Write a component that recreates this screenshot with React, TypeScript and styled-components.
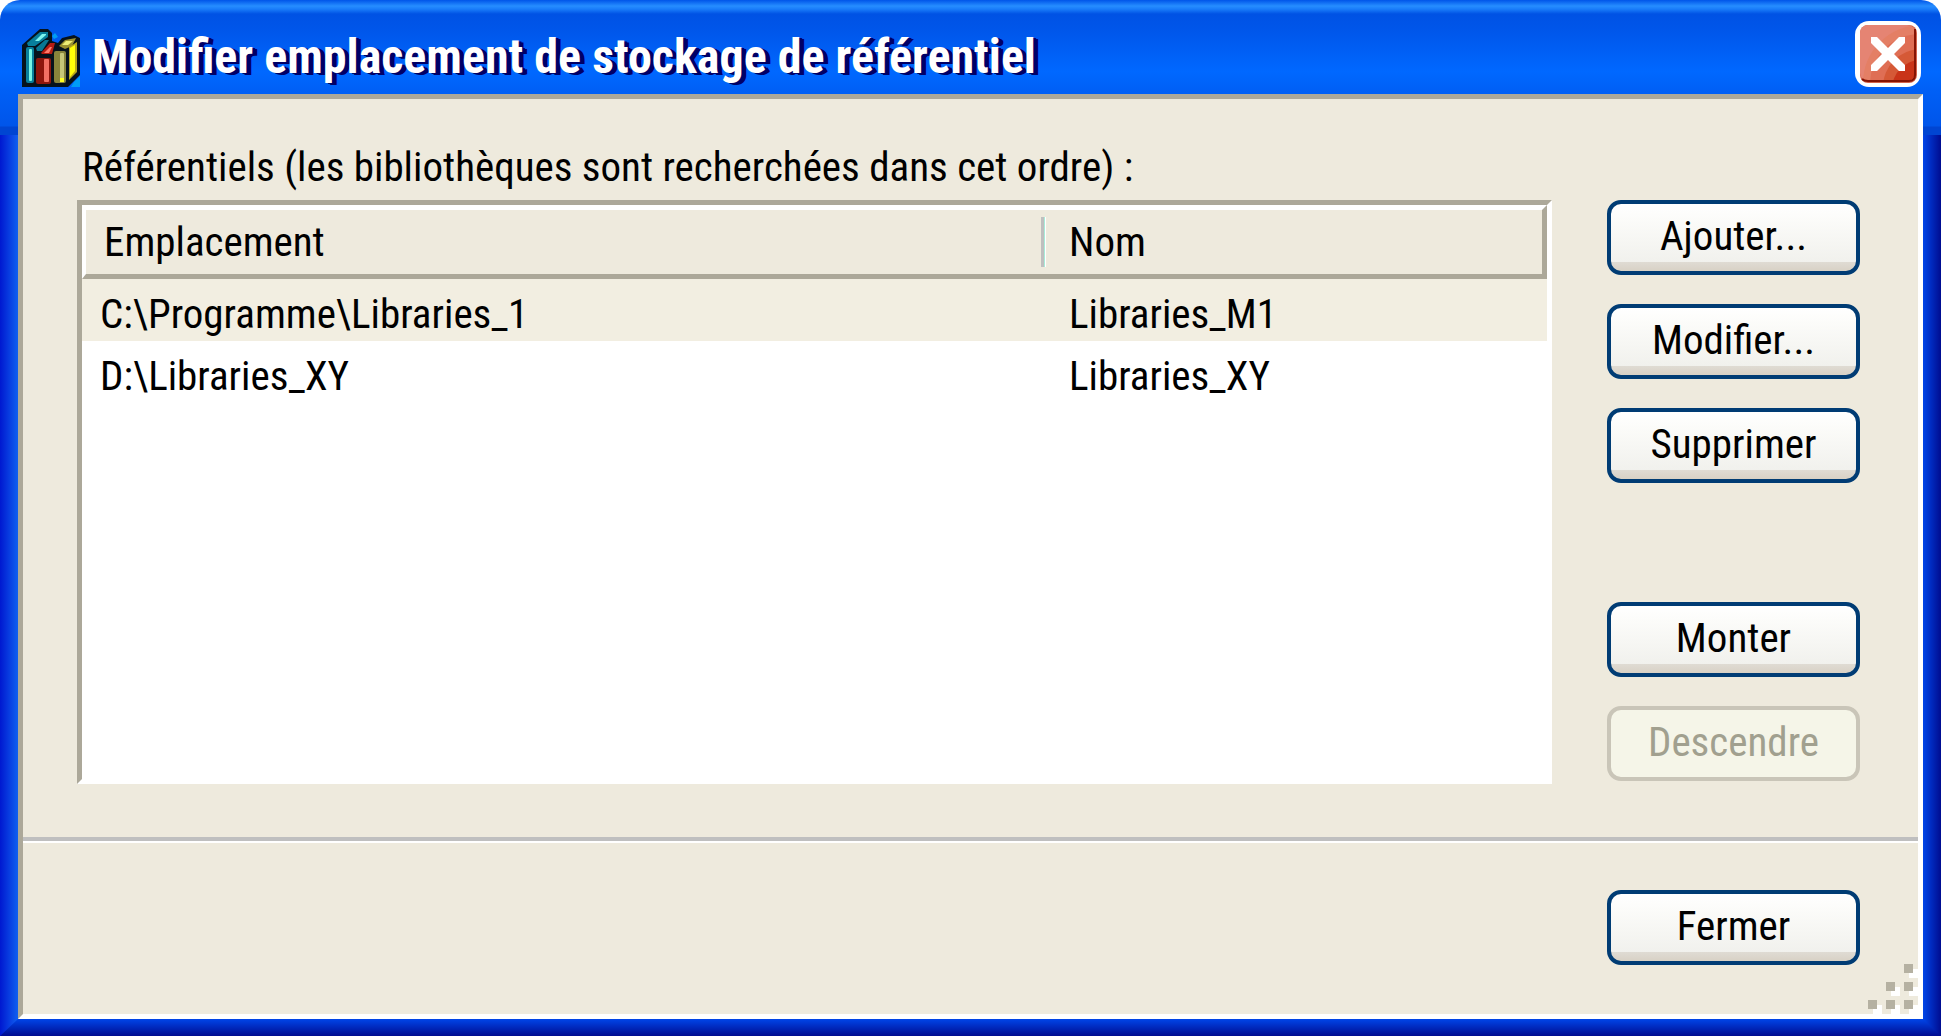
import React from "react";
import styled, { createGlobalStyle, css } from "styled-components";

const FACE = "#eeeadd";
const SHADE = "#aca899";

const GlobalStyle = createGlobalStyle`
  *, *::before, *::after { box-sizing: border-box; }
  body {
    margin: 0;
    background: #fff;
    color: #000;
    font-family: "Liberation Sans Narrow", "Arial Narrow", "Roboto Condensed", "Liberation Sans", sans-serif;
    font-size: 41px;
    line-height: 50px;
  }
`;

const Window = styled.main`
  position: relative;
  min-height: 100vh;
  display: flex;
  flex-direction: column;
  padding: 0 18px 17px;
  border-radius: 20px 20px 0 0;
  background:
    linear-gradient(#0055e9 0, #268dff 6px, #1a7dfa 9px, #0052e4 14px, #0056ea 30px, #0068ff 72px, #0060f6 90px, #0055ea 126px, #0045d2 127px, #0045d2 135px) top / 100% 135px no-repeat,
    linear-gradient(to right, #0018d0, #1060f0) left / 18px 100% no-repeat,
    linear-gradient(to right, #0045e8, #000c90) right / 18px 100% no-repeat;

  &::after {
    content: "";
    position: absolute;
    inset: auto 0 0;
    height: 17px;
    background: linear-gradient(#0045e8, #000c90);
    clip-path: polygon(0 100%, 18px 0, calc(100% - 18px) 0, 100% 100%);
  }
`;

const TitleBar = styled.header`
  display: flex;
  align-items: flex-end;
  height: 94px;
  padding: 0 2px 7px 4px;
  gap: 12px;
`;

const Title = styled.h1`
  flex: 1;
  margin: 0;
  color: #fff;
  font-size: 48px;
  line-height: 60px;
  font-weight: 700;
  text-shadow: 3px 1px #000066, 5px 2px #000066;
`;

const BooksIcon = styled.svg`
  width: 58px;
  height: 58px;
`;

const CloseButton = styled.button`
  width: 66px;
  height: 66px;
  padding: 0;
  border: 0;
  background: none;
  svg { display: block; }
`;

const Panel = styled.section`
  position: relative;
  flex: 1;
  display: flex;
  flex-direction: column;
  border: 5px solid;
  border-color: ${SHADE} #fff #fff ${SHADE};
  background: ${FACE};
`;

const Content = styled.div`
  flex: 1;
  display: flex;
  flex-direction: column;
  padding: 43px 58px 53px 54px;
`;

const Caption = styled.h2`
  margin: 0 0 8px 5px;
  font: inherit;
`;

const Columns = styled.div`
  flex: 1;
  display: grid;
  grid-template-columns: 1fr 253px;
  gap: 55px;
`;

const ListBox = styled.div`
  border: 5px solid;
  border-color: ${SHADE} #fff #fff ${SHADE};
  background: #fff;
`;

const Table = styled.table`
  width: 100%;
  table-layout: fixed;
  border-collapse: separate;
  border-spacing: 0;
`;

const HeadCell = styled.th<{ $last?: boolean }>`
  height: 74px;
  padding: 0 0 0 18px;
  border: 0 solid #fff;
  border-width: 5px 0 5px 4px;
  border-bottom-color: ${SHADE};
  background: ${FACE};
  font-weight: 400;
  text-align: left;
  ${({ $last }) =>
    $last &&
    css`
      width: 506px;
      padding: 0;
      border-width: 5px 5px 5px 0;
      border-right-color: ${SHADE};
    `}
`;

const Divided = styled.span`
  display: block;
  padding-left: 25px;
  border-left: 3px solid #bfbfbf;
  box-shadow: inset 1px 0 #a8ecd8, inset 2px 0 #fff;
`;

const Row = styled.tr<{ $selected?: boolean }>`
  height: 62px;
  background: ${({ $selected }) => ($selected ? "#f2eee1" : "#fff")};
`;

const Cell = styled.td<{ $name?: boolean }>`
  padding: 10px 0 2px ${({ $name }) => ($name ? 28 : 18)}px;
`;

const Actions = styled.div`
  display: flex;
  flex-direction: column;
  justify-content: space-between;
  padding-bottom: 3px;
`;

const ActionGroup = styled.div`
  display: flex;
  flex-direction: column;
  gap: 29px;
`;

const Button = styled.button`
  width: 253px;
  height: 75px;
  padding: 0 0 4px;
  border: 4px solid #003c74;
  border-radius: 14px;
  background: linear-gradient(#fff, #fcfcfa 20%, #f1f1ed 86%, #dfdbd3 87%, #d8d1c5);
  color: #000;
  font: inherit;
  &:disabled {
    border-color: #c9c5b8;
    background: #f5f5e8;
    color: #a1a08f;
  }
`;

const Footer = styled.footer`
  display: flex;
  justify-content: flex-end;
  padding: 49px 58px 49px;
  border-top: 4px solid #bfbfbf;
  box-shadow: inset 0 2px #fff;
`;

const Grip = styled.svg`
  position: absolute;
  right: 0;
  bottom: 0;
`;

const repositories = [
  { location: "C:\\Programme\\Libraries_1", name: "Libraries_M1" },
  { location: "D:\\Libraries_XY", name: "Libraries_XY" },
];

const gripDots = [
  [36, 0],
  [18, 18],
  [36, 18],
  [0, 36],
  [18, 36],
  [36, 36],
];

function Books() {
  return (
    <BooksIcon viewBox="0 0 58 58" aria-hidden="true">
      <path d="M0 16 18 0H26L30 4V12L36 14 40 9 52 6 58 9V46L46 58H0Z" fill="#06121c" />
      <path d="M30 7 33 4 36 8 32 10Z M52 53 58 47V58H49Z" fill="#009cf5" />
      <path d="M5 14 18 3H26V8L13 17H6Z" fill="#087f9c" />
      <path d="M13 12 20 5H24V6L17 12Z" fill="#7df4ed" />
      <path d="M14 19 23 11H27L20 22H15Z" fill="#087894" />
      <rect x="4" y="18" width="8" height="36" rx="2" fill="#087f9c" />
      <rect x="7" y="20" width="3" height="32" rx="1" fill="#78f5e5" />
      <path d="M19 24 28 14H33L30 25H20Z" fill="#b51c12" />
      <path d="M22 24 28 18H30L27 24Z" fill="#ff7b6c" />
      <rect x="14" y="29" width="15" height="26" rx="2" fill="#8e160d" />
      <rect x="22" y="30" width="5" height="23" rx="1" fill="#f37064" />
      <path d="M37 17 43 11 54 9 50 17 43 20Z" fill="#9b9230" />
      <path d="M40 16 44 12 51 12 46 16Z" fill="#eeee75" />
      <rect x="32" y="22" width="12" height="32" rx="2" fill="#88843b" />
      <rect x="38" y="24" width="4" height="29" rx="1" fill="#c7c778" />
      <path d="M38 49H42V53H38Z" fill="#ffff20" />
      <path d="M47 18 55 13V43L47 51Z" fill="#b9aa18" />
      <path d="M48 19 53 16V42L48 48Z" fill="#ffff08" />
    </BooksIcon>
  );
}

function CloseGlyph() {
  return (
    <svg width="66" height="66" viewBox="0 0 66 66" aria-hidden="true">
      <defs>
        <clipPath id="closeFace">
          <rect x="5" y="4" width="55" height="56" rx="8" />
        </clipPath>
      </defs>
      <rect width="66" height="66" rx="14" fill="#fff" />
      <rect x="5" y="4" width="57" height="58" rx="8" fill="#d4634a" />
      <g clipPath="url(#closeFace)">
        <rect x="4" y="4" width="58" height="58" fill="#e58473" />
        <circle cx="66" cy="62" r="58" fill="#e47f65" />
        <circle cx="65" cy="63" r="50" fill="#df6e54" />
        <circle cx="66" cy="66" r="38" fill="#d55936" />
        <circle cx="66" cy="68" r="29" fill="#c93418" />
      </g>
      <path d="M7 58Q9 60 13 60H54Q60 60 60 54V8" fill="none" stroke="#851404" strokeWidth="2" />
      <path d="M16 16H22L33 27 44 16H50V22L39 33 50 44V50H44L33 39 22 50H16V44L27 33 16 22Z" fill="#fff" />
    </svg>
  );
}

export default function App() {
  return (
    <>
      <GlobalStyle />
      <Window>
        <TitleBar>
          <Books />
          <Title>Modifier emplacement de stockage de référentiel</Title>
          <CloseButton type="button" aria-label="Fermer la fenêtre">
            <CloseGlyph />
          </CloseButton>
        </TitleBar>
        <Panel>
          <Content>
            <Caption id="repositories">Référentiels (les bibliothèques sont recherchées dans cet ordre) :</Caption>
            <Columns>
              <ListBox>
                <Table aria-labelledby="repositories">
                  <thead>
                    <tr>
                      <HeadCell scope="col">Emplacement</HeadCell>
                      <HeadCell scope="col" $last>
                        <Divided>Nom</Divided>
                      </HeadCell>
                    </tr>
                  </thead>
                  <tbody>
                    {repositories.map((repository, index) => (
                      <Row key={repository.name} $selected={index === 0}>
                        <Cell>{repository.location}</Cell>
                        <Cell $name>{repository.name}</Cell>
                      </Row>
                    ))}
                  </tbody>
                </Table>
              </ListBox>
              <Actions>
                <ActionGroup>
                  <Button type="button">Ajouter...</Button>
                  <Button type="button">Modifier...</Button>
                  <Button type="button">Supprimer</Button>
                </ActionGroup>
                <ActionGroup>
                  <Button type="button">Monter</Button>
                  <Button type="button" disabled>
                    Descendre
                  </Button>
                </ActionGroup>
              </Actions>
            </Columns>
          </Content>
          <Footer>
            <Button type="button">Fermer</Button>
          </Footer>
          <Grip width="50" height="50" viewBox="0 0 50 50" aria-hidden="true">
            {gripDots.map(([x, y]) => (
              <g key={`${x}-${y}`}>
                <rect x={x + 5} y={y + 5} width="9" height="9" fill="#fff" />
                <rect x={x} y={y} width="9" height="9" fill="#b5b1a2" />
              </g>
            ))}
          </Grip>
        </Panel>
      </Window>
    </>
  );
}
